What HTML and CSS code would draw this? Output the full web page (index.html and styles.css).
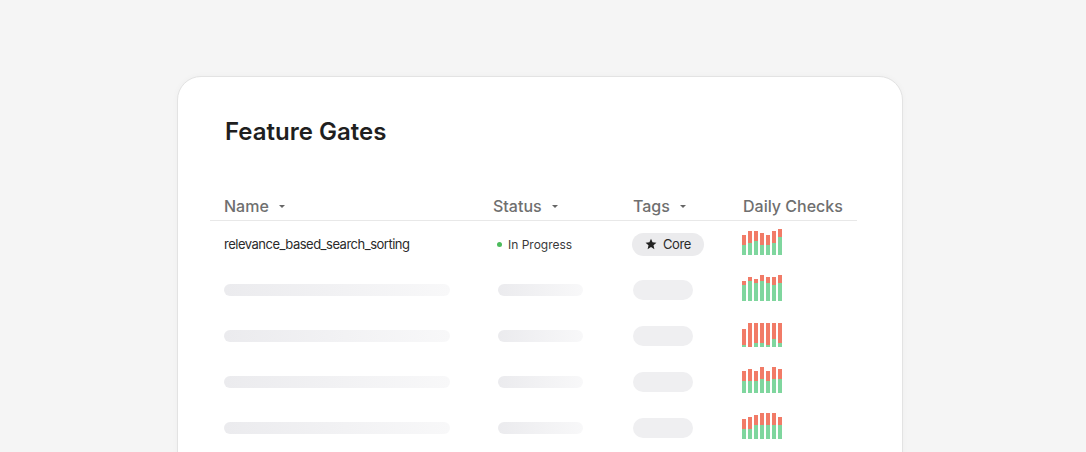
FILE: index.html
```html
<!DOCTYPE html>
<html lang="en">
<head>
<meta charset="utf-8">
<title>Feature Gates</title>
<link rel="stylesheet" href="styles.css">
</head>
<body>
<main class="card">
  <h1 class="title">Feature Gates</h1>
  <div class="table">
    <div class="row head">
      <div class="cell">Name<span class="caret"></span></div>
      <div class="cell">Status<span class="caret"></span></div>
      <div class="cell">Tags<span class="caret"></span></div>
      <div class="cell">Daily Checks</div>
    </div>

    <div class="row">
      <div class="cell name">relevance_based_search_sorting</div>
      <div class="cell status"><span class="dot"></span>In Progress</div>
      <div class="cell"><span class="tag"><svg class="star" viewBox="0 0 24 24" width="12" height="12"><path d="M12 1.5l3.1 7.2 7.8.7-5.9 5.2 1.8 7.7L12 18.2l-6.8 4.1 1.8-7.7-5.9-5.2 7.8-.7z" fill="#222"/></svg>Core</span></div>
      <div class="cell"><div class="chart">
        <div class="bar" style="height:20px"><span class="g" style="height:10px"></span></div>
        <div class="bar" style="height:24px"><span class="g" style="height:12px"></span></div>
        <div class="bar" style="height:24px"><span class="g" style="height:14px"></span></div>
        <div class="bar" style="height:22px"><span class="g" style="height:10px"></span></div>
        <div class="bar" style="height:20px"><span class="g" style="height:10px"></span></div>
        <div class="bar" style="height:24px"><span class="g" style="height:12px"></span></div>
        <div class="bar" style="height:26px"><span class="g" style="height:18px"></span></div>
      </div></div>
    </div>

    <div class="row">
      <div class="cell"><span class="sk sk-name"></span></div>
      <div class="cell status"><span class="sk sk-status"></span></div>
      <div class="cell"><span class="sk-tag"></span></div>
      <div class="cell"><div class="chart">
        <div class="bar" style="height:20px"><span class="g" style="height:16px"></span></div>
        <div class="bar" style="height:24px"><span class="g" style="height:20px"></span></div>
        <div class="bar" style="height:22px"><span class="g" style="height:18px"></span></div>
        <div class="bar" style="height:26px"><span class="g" style="height:20px"></span></div>
        <div class="bar" style="height:24px"><span class="g" style="height:18px"></span></div>
        <div class="bar" style="height:24px"><span class="g" style="height:16px"></span></div>
        <div class="bar" style="height:26px"><span class="g" style="height:18px"></span></div>
      </div></div>
    </div>

    <div class="row">
      <div class="cell"><span class="sk sk-name"></span></div>
      <div class="cell status"><span class="sk sk-status"></span></div>
      <div class="cell"><span class="sk-tag"></span></div>
      <div class="cell"><div class="chart">
        <div class="bar" style="height:18px"><span class="g" style="height:2px"></span></div>
        <div class="bar" style="height:24px"><span class="g" style="height:0px"></span></div>
        <div class="bar" style="height:24px"><span class="g" style="height:4px"></span></div>
        <div class="bar" style="height:24px"><span class="g" style="height:4px"></span></div>
        <div class="bar" style="height:24px"><span class="g" style="height:2px"></span></div>
        <div class="bar" style="height:24px"><span class="g" style="height:8px"></span></div>
        <div class="bar" style="height:24px"><span class="g" style="height:4px"></span></div>
      </div></div>
    </div>

    <div class="row">
      <div class="cell"><span class="sk sk-name"></span></div>
      <div class="cell status"><span class="sk sk-status"></span></div>
      <div class="cell"><span class="sk-tag"></span></div>
      <div class="cell"><div class="chart">
        <div class="bar" style="height:22px"><span class="g" style="height:12px"></span></div>
        <div class="bar" style="height:24px"><span class="g" style="height:12px"></span></div>
        <div class="bar" style="height:22px"><span class="g" style="height:12px"></span></div>
        <div class="bar" style="height:26px"><span class="g" style="height:14px"></span></div>
        <div class="bar" style="height:22px"><span class="g" style="height:12px"></span></div>
        <div class="bar" style="height:26px"><span class="g" style="height:14px"></span></div>
        <div class="bar" style="height:24px"><span class="g" style="height:14px"></span></div>
      </div></div>
    </div>

    <div class="row">
      <div class="cell"><span class="sk sk-name"></span></div>
      <div class="cell status"><span class="sk sk-status"></span></div>
      <div class="cell"><span class="sk-tag"></span></div>
      <div class="cell"><div class="chart">
        <div class="bar" style="height:20px"><span class="g" style="height:10px"></span></div>
        <div class="bar" style="height:22px"><span class="g" style="height:10px"></span></div>
        <div class="bar" style="height:24px"><span class="g" style="height:14px"></span></div>
        <div class="bar" style="height:26px"><span class="g" style="height:14px"></span></div>
        <div class="bar" style="height:26px"><span class="g" style="height:14px"></span></div>
        <div class="bar" style="height:26px"><span class="g" style="height:14px"></span></div>
        <div class="bar" style="height:22px"><span class="g" style="height:14px"></span></div>
      </div></div>
    </div>
  </div>
</main>
</body>
</html>
```

FILE: styles.css
```css
html, body {
  margin: 0;
  height: 452px;
  overflow: hidden;
}
body {
  background: #f5f5f5;
  font-family: Inter, "Noto Sans", sans-serif;
  color: #222;
  padding: 76px 0 0 177px;
  box-sizing: border-box;
}
.card {
  width: 726px;
  min-height: 420px;
  box-sizing: border-box;
  background: #fff;
  border: 1px solid #e3e3e3;
  border-radius: 24px;
  box-shadow: 0 0 6px rgba(0, 0, 0, 0.03);
  padding: 39px 45px 0 32px;
}
.title {
  margin: 0 0 0 15px;
  font-size: 24px;
  line-height: 32px;
  font-weight: 600;
  color: #1f1f1f;
}
.table {
  margin-top: 46px;
}
.row {
  display: grid;
  grid-template-columns: 269px 140px 110px 1fr;
  align-items: center;
  height: 46px;
}
.row.head {
  height: auto;
  border-bottom: 1px solid #e8e8e8;
  padding-bottom: 2px;
}
.cell {
  padding-left: 14px;
  display: flex;
  align-items: center;
}
.head .cell {
  font-size: 16px;
  line-height: 24px;
  font-weight: 500;
  color: #6f6f6f;
}
.caret {
  width: 0;
  height: 0;
  border-left: 3px solid transparent;
  border-right: 3px solid transparent;
  border-top: 3px solid #666;
  margin-left: 10px;
  margin-top: 1px;
}
.name {
  font-size: 13px;
  letter-spacing: -0.5px;
  color: #2a2a2a;
}
.status {
  padding-left: 18px;
  font-size: 12px;
  color: #3a3a3a;
}
.dot {
  width: 5px;
  height: 5px;
  border-radius: 50%;
  background: #4cbb5c;
  margin-right: 6px;
}
.tag {
  display: inline-flex;
  align-items: center;
  height: 23px;
  padding: 0 13px 0 13px;
  border-radius: 12px;
  background: #ebebed;
  font-size: 13px;
  letter-spacing: -0.4px;
  color: #2a2a2a;
  margin-left: -1px;
}
.star {
  margin-right: 6px;
}
.sk {
  display: block;
  height: 12px;
  border-radius: 6px;
  background: linear-gradient(90deg, #ebebee, #f8f8f9);
}
.sk-name {
  width: 226px;
}
.status .sk-status {
  width: 85px;
  margin-left: 1px;
}
.sk-tag {
  display: block;
  width: 60px;
  height: 20px;
  border-radius: 10px;
  background: #efeff1;
}
.chart {
  display: flex;
  align-items: flex-end;
  gap: 2px;
  height: 20px;
  margin-top: 1px;
  margin-left: -1px;
}
.bar {
  width: 4px;
  display: flex;
  flex-direction: column;
  justify-content: flex-end;
  background: #f17b67;
}
.g {
  display: block;
  background: #7fd69e;
}
```
